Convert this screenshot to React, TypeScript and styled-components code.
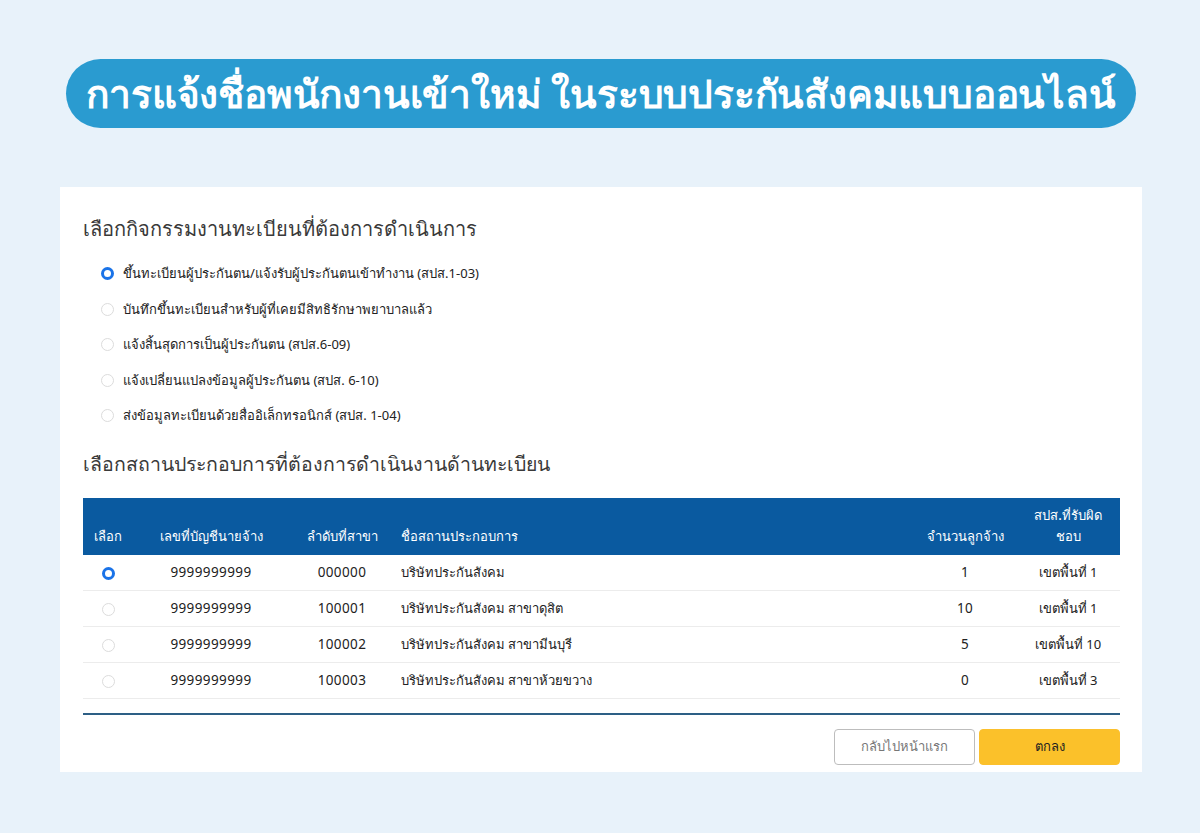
import { createGlobalStyle } from "styled-components";
import styled from "styled-components";

const GlobalStyle = createGlobalStyle`
  html, body {
    margin: 0;
    padding: 0;
    background: #e8f2fa;
    font-family: "Noto Sans", "DejaVu Sans", sans-serif;
  }
`;

const Page = styled.div`
  width: 1200px;
  height: 833px;
  box-sizing: border-box;
  padding-top: 59px;
  display: flex;
  flex-direction: column;
  align-items: center;
`;

const TitlePill = styled.h1`
  margin: 0 0 0 2px;
  width: 1070px;
  height: 69px;
  border-radius: 35px;
  background: #2a9bd0;
  color: #fff;
  display: flex;
  align-items: center;
  justify-content: center;
  font-size: 38.8px;
  font-weight: 700;
  letter-spacing: -0.2px;
`;

const Panel = styled.section`
  margin: 59px 0 0 2px;
  width: 1082px;
  height: 585px;
  box-sizing: border-box;
  background: #fff;
  padding: 28px 22px 0 23px;
  display: flex;
  flex-direction: column;
`;

const SectionTitle = styled.h2<{ $size?: number }>`
  margin: 0;
  font-size: ${(p) => p.$size || 20}px;
  font-weight: 400;
  color: #3a3a3a;
  line-height: 28px;
`;

const RadioList = styled.div`
  display: flex;
  flex-direction: column;
  margin-top: 13px;
  margin-left: 18px;
  margin-bottom: 16px;
`;

const RadioRow = styled.label`
  display: flex;
  align-items: center;
  gap: 9px;
  height: 35.5px;
  font-size: 13px;
  color: #222;
`;

const Radio = styled.span<{ $on?: boolean }>`
  display: inline-block;
  vertical-align: middle;
  width: 13px;
  height: 13px;
  box-sizing: border-box;
  border-radius: 50%;
  border: ${(p) => (p.$on ? "3.5px solid #1a73e8" : "1px solid #dcdcdc")};
  background: #fff;
  flex-shrink: 0;
`;

const Table = styled.table`
  margin-top: 20px;
  width: 100%;
  table-layout: fixed;
  border-collapse: collapse;
  font-size: 13px;
  color: #222;
  border-bottom: 2px solid #2d5f85;
`;

const HeadCell = styled.th<{ $align?: string }>`
  background: #0a5aa0;
  color: #fff;
  font-weight: 500;
  height: 49px;
  vertical-align: bottom;
  padding: 0 6px 8px;
  text-align: ${(p) => p.$align || "center"};
  line-height: 21px;
`;

const Cell = styled.td<{ $align?: string }>`
  height: 35px;
  padding: 0 6px;
  border-bottom: 1px solid #ececec;
  text-align: ${(p) => p.$align || "center"};
`;

const Digits = styled.span`
  font-size: 13.5px;
  letter-spacing: 0.4px;
`;

const SpacerRow = styled.td`
  height: 14px;
  padding: 0;
`;

const Actions = styled.div`
  display: flex;
  justify-content: flex-end;
  gap: 4px;
  margin-top: 14px;
`;

const Button = styled.button<{ $primary?: boolean }>`
  width: 141px;
  height: 36px;
  border-radius: 4px;
  font-family: inherit;
  font-size: 13px;
  cursor: pointer;
  border: ${(p) => (p.$primary ? "1px solid #fbc02d" : "1px solid #bdbdbd")};
  background: ${(p) => (p.$primary ? "#fbc12a" : "#fff")};
  color: ${(p) => (p.$primary ? "#222" : "#777")};
`;

const activities = [
  "ขึ้นทะเบียนผู้ประกันตน/แจ้งรับผู้ประกันตนเข้าทำงาน (สปส.1-03)",
  "บันทึกขึ้นทะเบียนสำหรับผู้ที่เคยมีสิทธิรักษาพยาบาลแล้ว",
  "แจ้งสิ้นสุดการเป็นผู้ประกันตน (สปส.6-09)",
  "แจ้งเปลี่ยนแปลงข้อมูลผู้ประกันตน (สปส. 6-10)",
  "ส่งข้อมูลทะเบียนด้วยสื่ออิเล็กทรอนิกส์ (สปส. 1-04)",
];

const branches = [
  { acc: "9999999999", no: "000000", name: "บริษัทประกันสังคม", staff: "1", zone: "เขตพื้นที่ 1" },
  { acc: "9999999999", no: "100001", name: "บริษัทประกันสังคม สาขาดุสิต", staff: "10", zone: "เขตพื้นที่ 1" },
  { acc: "9999999999", no: "100002", name: "บริษัทประกันสังคม สาขามีนบุรี", staff: "5", zone: "เขตพื้นที่ 10" },
  { acc: "9999999999", no: "100003", name: "บริษัทประกันสังคม สาขาห้วยขวาง", staff: "0", zone: "เขตพื้นที่ 3" },
];

export default function App() {
  return (
    <>
      <GlobalStyle />
      <Page>
        <TitlePill>การแจ้งชื่อพนักงานเข้าใหม่ ในระบบประกันสังคมแบบออนไลน์</TitlePill>
        <Panel>
          <SectionTitle>เลือกกิจกรรมงานทะเบียนที่ต้องการดำเนินการ</SectionTitle>
          <RadioList>
            {activities.map((a, i) => (
              <RadioRow key={a}>
                <Radio $on={i === 0} />
                {a}
              </RadioRow>
            ))}
          </RadioList>
          <SectionTitle $size={19.5}>เลือกสถานประกอบการที่ต้องการดำเนินงานด้านทะเบียน</SectionTitle>
          <Table>
            <colgroup>
              <col style={{ width: 50 }} />
              <col style={{ width: 156 }} />
              <col style={{ width: 106 }} />
              <col />
              <col style={{ width: 102 }} />
              <col style={{ width: 104 }} />
            </colgroup>
            <thead>
              <tr>
                <HeadCell>เลือก</HeadCell>
                <HeadCell>เลขที่บัญชีนายจ้าง</HeadCell>
                <HeadCell>ลำดับที่สาขา</HeadCell>
                <HeadCell $align="left">ชื่อสถานประกอบการ</HeadCell>
                <HeadCell>จำนวนลูกจ้าง</HeadCell>
                <HeadCell>สปส.ที่รับผิด<br />ชอบ</HeadCell>
              </tr>
            </thead>
            <tbody>
              {branches.map((b, i) => (
                <tr key={b.no}>
                  <Cell>
                    <Radio $on={i === 0} />
                  </Cell>
                  <Cell><Digits>{b.acc}</Digits></Cell>
                  <Cell><Digits>{b.no}</Digits></Cell>
                  <Cell $align="left">{b.name}</Cell>
                  <Cell><Digits>{b.staff}</Digits></Cell>
                  <Cell>{b.zone}</Cell>
                </tr>
              ))}
              <tr>
                <SpacerRow colSpan={6} />
              </tr>
            </tbody>
          </Table>
          <Actions>
            <Button>กลับไปหน้าแรก</Button>
            <Button $primary>ตกลง</Button>
          </Actions>
        </Panel>
      </Page>
    </>
  );
}
